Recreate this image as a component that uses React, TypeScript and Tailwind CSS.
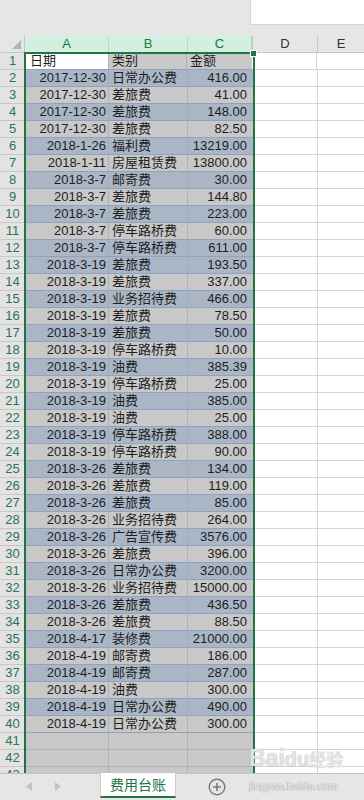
import React from 'react';

type Row = [string, string, string];

const rows: Row[] = [
  ['2017-12-30', '日常办公费', '416.00'],
  ['2017-12-30', '差旅费', '41.00'],
  ['2017-12-30', '差旅费', '148.00'],
  ['2017-12-30', '差旅费', '82.50'],
  ['2018-1-26', '福利费', '13219.00'],
  ['2018-1-11', '房屋租赁费', '13800.00'],
  ['2018-3-7', '邮寄费', '30.00'],
  ['2018-3-7', '差旅费', '144.80'],
  ['2018-3-7', '差旅费', '223.00'],
  ['2018-3-7', '停车路桥费', '60.00'],
  ['2018-3-7', '停车路桥费', '611.00'],
  ['2018-3-19', '差旅费', '193.50'],
  ['2018-3-19', '差旅费', '337.00'],
  ['2018-3-19', '业务招待费', '466.00'],
  ['2018-3-19', '差旅费', '78.50'],
  ['2018-3-19', '差旅费', '50.00'],
  ['2018-3-19', '停车路桥费', '10.00'],
  ['2018-3-19', '油费', '385.39'],
  ['2018-3-19', '停车路桥费', '25.00'],
  ['2018-3-19', '油费', '385.00'],
  ['2018-3-19', '油费', '25.00'],
  ['2018-3-19', '停车路桥费', '388.00'],
  ['2018-3-19', '停车路桥费', '90.00'],
  ['2018-3-26', '差旅费', '134.00'],
  ['2018-3-26', '差旅费', '119.00'],
  ['2018-3-26', '差旅费', '85.00'],
  ['2018-3-26', '业务招待费', '264.00'],
  ['2018-3-26', '广告宣传费', '3576.00'],
  ['2018-3-26', '差旅费', '396.00'],
  ['2018-3-26', '日常办公费', '3200.00'],
  ['2018-3-26', '业务招待费', '15000.00'],
  ['2018-3-26', '差旅费', '436.50'],
  ['2018-3-26', '差旅费', '88.50'],
  ['2018-4-17', '装修费', '21000.00'],
  ['2018-4-19', '邮寄费', '186.00'],
  ['2018-4-19', '邮寄费', '287.00'],
  ['2018-4-19', '油费', '300.00'],
  ['2018-4-19', '日常办公费', '490.00'],
  ['2018-4-19', '日常办公费', '300.00'],
];

// banding in the sheet isn't perfectly regular
const isBlue = (n: number) => (n <= 12 ? n % 2 === 0 : n % 2 === 1);

const RowNum = ({ n }: { n: number }) => (
  <div className="w-[25px] shrink-0 h-full bg-[#e3e3e3] border-b border-[#c8c8c8] text-center text-[#2d7450] text-[13px] leading-[16px]">
    {n}
  </div>
);

const Blank = () => (
  <>
    <div className="w-[65px] shrink-0 h-full bg-white border-r border-b border-[#d6d6d6]" />
    <div className="flex-1 h-full bg-white border-b border-[#d6d6d6]" />
  </>
);

const DataRow = ({ n, r }: { n: number; r: Row }) => {
  const blue = isBlue(n);
  const bg = blue ? 'bg-[#aab6c6]' : 'bg-[#c8c8c8]';
  const vline = blue ? 'border-[#a2aebe]' : 'border-[#b1b1b1]';
  return (
    <div className="h-[17px] flex shrink-0">
      <RowNum n={n} />
      <div className={`w-[84px] shrink-0 h-full ${bg} border-b border-b-[#8fa3bd] border-r ${vline} text-right pr-[2px] text-[13px] leading-[16px] text-[#1e1e1e]`}>
        {r[0]}
      </div>
      <div className={`w-[79px] shrink-0 h-full ${bg} border-b border-b-[#8fa3bd] border-r ${vline} pl-[3px] text-[13px] leading-[16px] text-[#1e1e1e] whitespace-nowrap`}>
        {r[1]}
      </div>
      <div className={`w-[65px] shrink-0 h-full ${bg} border-b border-b-[#8fa3bd] text-right pr-[6px] text-[13px] leading-[16px] text-[#1e1e1e]`}>
        {r[2]}
      </div>
      <Blank />
    </div>
  );
};

const EmptyRow = ({ n }: { n: number }) => (
  <div className="h-[17px] flex shrink-0">
    <RowNum n={n} />
    <div className="w-[84px] shrink-0 h-full bg-[#c8c8c8] border-r border-b border-[#b1b1b1]" />
    <div className="w-[79px] shrink-0 h-full bg-[#c8c8c8] border-r border-b border-[#b1b1b1]" />
    <div className="w-[65px] shrink-0 h-full bg-[#c8c8c8] border-b border-[#b1b1b1]" />
    <Blank />
  </div>
);

export default function App() {
  return (
    <div className="w-[364px] h-[800px] relative overflow-hidden bg-[#e6e6e6] flex flex-col font-['Liberation_Sans','Noto_Sans_CJK_SC',sans-serif]">
      {/* formula area */}
      <div className="h-[36px] shrink-0 flex justify-end">
        <div className="w-[114px] h-[25px] bg-white border-l border-b border-[#d4d4d4]" />
      </div>

      {/* column headers */}
      <div className="h-[17px] shrink-0 flex text-[13px] leading-[16px]">
        <div className="w-[25px] shrink-0 h-full bg-[#e6e6e6] border-r border-b border-[#c6c6c6] relative">
          <svg className="absolute right-[3px] bottom-[3px]" width="9" height="9" viewBox="0 0 9 9">
            <polygon points="9,0 9,9 0,9" fill="#b5b5b5" />
          </svg>
        </div>
        {['A', 'B', 'C'].map((c, i) => (
          <div
            key={c}
            className={`${i === 0 ? 'w-[84px]' : i === 1 ? 'w-[79px]' : 'w-[64px]'} shrink-0 h-full bg-[#d3efdf] border-r border-b border-r-[#bcd9c8] border-b-[#b0ccbc] text-center text-[#217346]`}
          >
            {c}
          </div>
        ))}
        <div className="w-[66px] shrink-0 h-full bg-[#e6e6e6] border-l border-r border-b border-[#c6c6c6] text-center text-[#333]">D</div>
        <div className="flex-1 h-full bg-[#e6e6e6] border-b border-[#c6c6c6] text-center text-[#333]">E</div>
      </div>

      {/* cells */}
      <div className="flex-1 overflow-hidden flex flex-col">
        <div className="h-[17px] flex shrink-0 text-[13px] leading-[16px] text-[#1e1e1e]">
          <RowNum n={1} />
          <div className="w-[84px] shrink-0 h-full bg-white border-b border-[#8fa3bd] pl-[5px]">日期</div>
          <div className="w-[79px] shrink-0 h-full bg-[#c8c8c8] border-l border-r border-b border-l-[#b1b1b1] border-r-[#b1b1b1] border-b-[#8fa3bd] pl-[3px] -ml-px">类别</div>
          <div className="w-[65px] shrink-0 h-full bg-[#c8c8c8] border-b border-[#8fa3bd] pl-[3px]">金额</div>
          <Blank />
        </div>
        {rows.map((r, i) => (
          <DataRow key={i} n={i + 2} r={r} />
        ))}
        <EmptyRow n={41} />
        <EmptyRow n={42} />
        <EmptyRow n={43} />
      </div>

      {/* sheet tabs */}
      <div className="h-[27px] shrink-0 flex items-start bg-[#e6e6e6] border-t border-[#c2c2c2] relative z-20">
        <div className="w-[100px] h-[25px] flex items-center">
          <svg className="ml-[26px]" width="6" height="9" viewBox="0 0 6 9">
            <polygon points="6,0 6,9 0,4.5" fill="#c2c2c2" />
          </svg>
          <svg className="ml-[23px]" width="6" height="9" viewBox="0 0 6 9">
            <polygon points="0,0 0,9 6,4.5" fill="#c2c2c2" />
          </svg>
        </div>
        <div className="w-[76px] h-[25px] -mt-px bg-white border-x border-[#cfcfcf] border-b-2 border-b-[#217346] text-center text-[14px] leading-[22px] text-[#217346] font-['Noto_Sans_CJK_SC',sans-serif]">
          费用台账
        </div>
        <div className="w-[82px] h-[25px] flex items-center justify-center">
          <svg width="18" height="18" viewBox="0 0 18 18">
            <circle cx="9" cy="9" r="7.8" fill="none" stroke="#7a7a7a" strokeWidth="1.4" />
            <path d="M9 5v8M5 9h8" stroke="#7a7a7a" strokeWidth="1.6" />
          </svg>
        </div>
      </div>

      {/* selection outline over A:C */}
      <div className="absolute left-[24px] top-[52px] w-[231px] bottom-[27px] border-2 border-b-0 border-[#217346] pointer-events-none z-10" />
      <div className="absolute left-[250px] top-[50px] w-[7px] h-[7px] bg-[#217346] border border-white pointer-events-none z-10" />

      {/* watermark */}
      <div className="absolute left-[249px] top-[745px] z-30 pointer-events-none flex flex-col items-start">
        <div className="text-[23px] leading-[26px] font-bold text-white/75 [text-shadow:0_0_1px_#8c8c8c]">
          Bai<span className="text-[20px]">du</span><span className="text-[17px] font-normal">经验</span>
        </div>
        <div className="text-[11px] leading-[14px] mt-[5px] text-white/90 [text-shadow:0_0_1px_#8c8c8c,0_0_1px_#8c8c8c]">jingyan.baidu.com</div>
      </div>
    </div>
  );
}
